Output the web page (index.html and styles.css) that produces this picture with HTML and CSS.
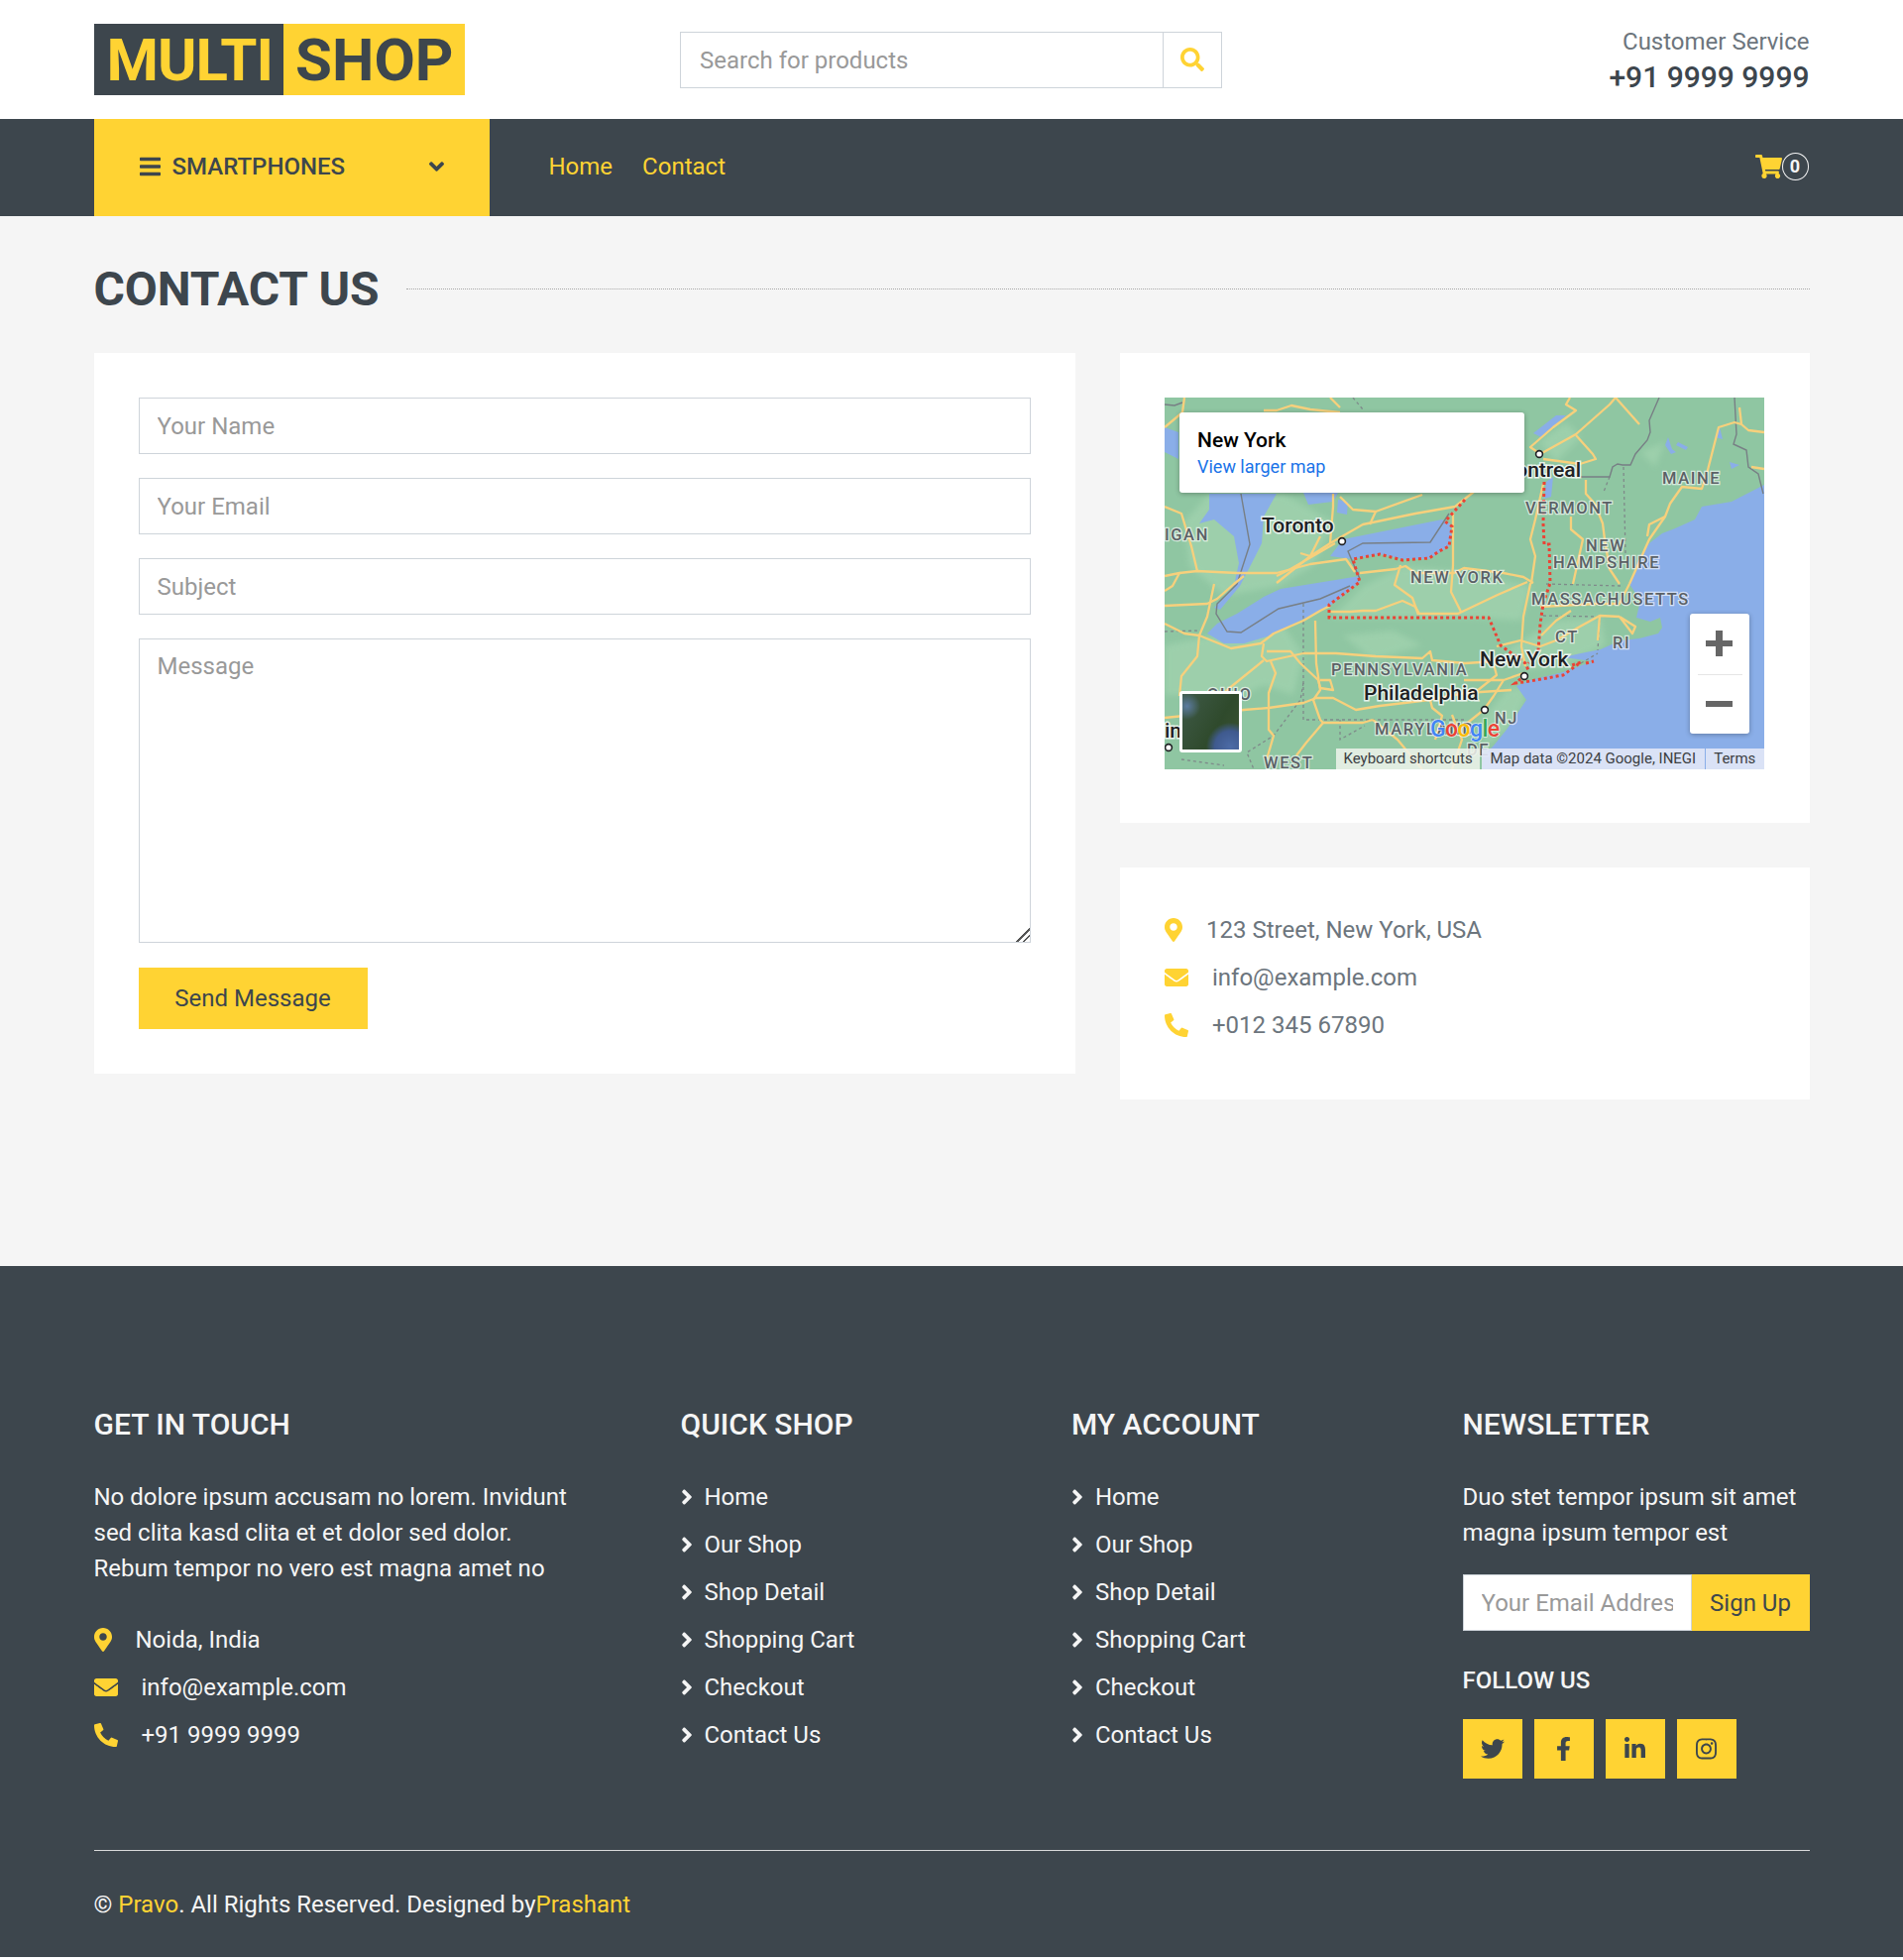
FILE: index.html
```html
<!DOCTYPE html>
<html lang="en">
<head>
<meta charset="utf-8">
<title>MultiShop - Contact</title>
<link rel="stylesheet" href="styles.css">
</head>
<body>
<svg class="sprite" aria-hidden="true">
  <symbol id="i-pin" viewBox="0 0 384 512"><path d="M172.268 501.67C26.97 291.031 0 269.413 0 192 0 85.961 85.961 0 192 0s192 85.961 192 192c0 77.413-26.97 99.031-172.268 309.67-9.535 13.774-29.93 13.773-39.464 0zM192 272c44.183 0 80-35.817 80-80s-35.817-80-80-80-80 35.817-80 80 35.817 80 80 80z"/></symbol>
  <symbol id="i-mail" viewBox="0 0 512 512"><path d="M502.3 190.8c3.9-3.1 9.7-.2 9.7 4.7V400c0 26.5-21.5 48-48 48H48c-26.5 0-48-21.5-48-48V195.6c0-5 5.7-7.8 9.7-4.7 22.4 17.4 52.1 39.5 154.1 113.6 21.1 15.4 56.7 47.8 92.2 47.6 35.7.3 72-32.8 92.3-47.6 102-74.1 131.6-96.3 154-113.7zM256 320c23.2.4 56.6-29.2 73.4-41.4 132.7-96.3 142.8-104.7 173.4-128.7 5.8-4.5 9.2-11.5 9.2-18.9v-19c0-26.5-21.5-48-48-48H48C21.5 64 0 85.5 0 112v19c0 7.4 3.4 14.3 9.2 18.9 30.6 23.9 40.7 32.4 173.4 128.7 16.8 12.2 50.2 41.8 73.4 41.4z"/></symbol>
  <symbol id="i-phone" viewBox="0 0 512 512"><path d="M497.39 361.8l-112-48a24 24 0 0 0-28 6.9l-49.6 60.6A370.66 370.66 0 0 1 130.6 204.11l60.6-49.6a23.94 23.94 0 0 0 6.9-28l-48-112A24.16 24.16 0 0 0 122.6.61l-104 24A24 24 0 0 0 0 48c0 256.5 207.9 464 464 464a24 24 0 0 0 23.4-18.6l24-104a24.29 24.29 0 0 0-14.01-27.6z"/></symbol>
  <symbol id="i-search" viewBox="0 0 512 512"><path d="M505 442.7L405.3 343c-4.5-4.5-10.6-7-17-7H372c27.6-35.3 44-79.7 44-128C416 93.1 322.9 0 208 0S0 93.1 0 208s93.1 208 208 208c48.3 0 92.7-16.4 128-44v16.3c0 6.4 2.5 12.5 7 17l99.7 99.7c9.4 9.4 24.6 9.4 33.9 0l28.3-28.3c9.4-9.4 9.4-24.6.1-34zM208 336c-70.7 0-128-57.2-128-128 0-70.7 57.2-128 128-128 70.7 0 128 57.2 128 128 0 70.7-57.2 128-128 128z"/></symbol>
  <symbol id="i-bars" viewBox="0 0 448 512"><path d="M16 132h416c8.837 0 16-7.163 16-16V76c0-8.837-7.163-16-16-16H16C7.163 60 0 67.163 0 76v40c0 8.837 7.163 16 16 16zm0 160h416c8.837 0 16-7.163 16-16v-40c0-8.837-7.163-16-16-16H16c-8.837 0-16 7.163-16 16v40c0 8.837 7.163 16 16 16zm0 160h416c8.837 0 16-7.163 16-16v-40c0-8.837-7.163-16-16-16H16c-8.837 0-16 7.163-16 16v40c0 8.837 7.163 16 16 16z"/></symbol>
  <symbol id="i-down" viewBox="0 0 320 512"><path d="M143 352.3L7 216.3c-9.4-9.4-9.4-24.6 0-33.9l22.6-22.6c9.4-9.4 24.6-9.4 33.9 0l96.4 96.4 96.4-96.4c9.4-9.4 24.6-9.4 33.9 0l22.6 22.6c9.4 9.4 9.4 24.6 0 33.9l-136 136c-9.2 9.4-24.4 9.4-33.8 0z"/></symbol>
  <symbol id="i-right" viewBox="0 0 256 512"><path d="M224.3 273l-136 136c-9.4 9.4-24.6 9.4-33.9 0l-22.6-22.6c-9.4-9.4-9.4-24.6 0-33.9l96.4-96.4-96.4-96.4c-9.4-9.4-9.4-24.6 0-33.9L54.3 103c9.4-9.4 24.6-9.4 33.9 0l136 136c9.5 9.4 9.5 24.6.1 34z"/></symbol>
  <symbol id="i-cart" viewBox="0 0 576 512"><path d="M528.12 301.319l47.273-208C578.806 78.301 567.391 64 551.99 64H159.208l-9.166-44.81C147.758 8.021 137.93 0 126.529 0H24C10.745 0 0 10.745 0 24v16c0 13.255 10.745 24 24 24h69.883l70.248 343.435C147.325 417.1 136 435.222 136 456c0 30.928 25.072 56 56 56s56-25.072 56-56c0-15.674-6.447-29.835-16.824-40h209.647C430.447 426.165 424 440.326 424 456c0 30.928 25.072 56 56 56s56-25.072 56-56c0-22.172-12.888-41.332-31.579-50.405l5.517-24.276c3.413-15.018-8.002-29.319-23.403-29.319H218.117l-6.545-32h293.145c11.206 0 20.92-7.754 23.403-18.681z"/></symbol>
  <symbol id="i-twitter" viewBox="0 0 512 512"><path d="M459.37 151.716c.325 4.548.325 9.097.325 13.645 0 138.72-105.583 298.558-298.558 298.558-59.452 0-114.68-17.219-161.137-47.106 8.447.974 16.568 1.299 25.34 1.299 49.055 0 94.213-16.568 130.274-44.832-46.132-.975-84.792-31.188-98.112-72.772 6.498.974 12.995 1.624 19.818 1.624 9.421 0 18.843-1.3 27.614-3.573-48.081-9.747-84.143-51.98-84.143-102.985v-1.299c13.969 7.797 30.214 12.67 47.431 13.319-28.264-18.843-46.781-51.005-46.781-87.391 0-19.492 5.197-37.36 14.294-52.954 51.655 63.675 129.3 105.258 216.365 109.807-1.624-7.797-2.599-15.918-2.599-24.04 0-57.828 46.782-104.934 104.934-104.934 30.213 0 57.502 12.67 76.67 33.137 23.715-4.548 46.456-13.32 66.599-25.34-7.798 24.366-24.366 44.833-46.132 57.827 21.117-2.273 41.584-8.122 60.426-16.243-14.292 20.791-32.161 39.308-52.628 54.253z"/></symbol>
  <symbol id="i-fb" viewBox="0 0 320 512"><path d="M279.14 288l14.22-92.66h-88.91v-60.13c0-25.35 12.42-50.06 52.24-50.06h40.42V6.26S260.43 0 225.36 0c-73.22 0-121.08 44.38-121.08 124.72v70.62H22.89V288h81.39v224h100.17V288z"/></symbol>
  <symbol id="i-in" viewBox="0 0 448 512"><path d="M100.28 448H7.4V148.9h92.88zM53.79 108.1C24.09 108.1 0 83.5 0 53.8a53.79 53.79 0 0 1 107.58 0c0 29.7-24.1 54.3-53.79 54.3zM447.9 448h-92.68V302.4c0-34.7-.7-79.2-48.29-79.2-48.29 0-55.69 37.7-55.69 76.7V448h-92.78V148.9h89.08v40.8h1.3c12.4-23.5 42.69-48.3 87.88-48.3 94 0 111.28 61.9 111.28 142.3V448z"/></symbol>
  <symbol id="i-ig" viewBox="0 0 448 512"><path d="M224.1 141c-63.6 0-114.9 51.3-114.9 114.9s51.3 114.9 114.9 114.9S339 319.5 339 255.9 287.7 141 224.1 141zm0 189.6c-41.1 0-74.7-33.5-74.7-74.7s33.5-74.7 74.7-74.7 74.7 33.5 74.7 74.7-33.6 74.7-74.7 74.7zm146.4-194.3c0 14.9-12 26.8-26.8 26.8-14.9 0-26.8-12-26.8-26.8s12-26.8 26.8-26.8 26.8 12 26.8 26.8zm76.1 27.2c-1.7-35.9-9.9-67.7-36.2-93.9-26.2-26.2-58-34.4-93.9-36.2-37-2.1-147.9-2.1-184.9 0-35.8 1.7-67.6 9.9-93.9 36.1s-34.4 58-36.2 93.9c-2.1 37-2.1 147.9 0 184.9 1.7 35.9 9.9 67.7 36.2 93.9s58 34.4 93.9 36.2c37 2.1 147.9 2.1 184.9 0 35.9-1.7 67.7-9.9 93.9-36.2 26.2-26.2 34.4-58 36.2-93.9 2.1-37 2.1-147.8 0-184.8zM398.8 388c-7.8 19.6-22.9 34.7-42.6 42.6-29.5 11.7-99.5 9-132.1 9s-102.7 2.6-132.1-9c-19.6-7.8-34.7-22.9-42.6-42.6-11.7-29.5-9-99.5-9-132.1s-2.6-102.7 9-132.1c7.8-19.6 22.9-34.7 42.6-42.6 29.5-11.7 99.5-9 132.1-9s102.7-2.6 132.1 9c19.6 7.8 34.7 22.9 42.6 42.6 11.7 29.5 9 99.5 9 132.1s2.7 102.7-9 132.1z"/></symbol>
</svg>

<header class="topbar">
  <a class="logo" href="#"><span class="logo-dark">MULTI</span><span class="logo-light">SHOP</span></a>
  <form class="search">
    <input class="search-input" type="text" placeholder="Search for products">
    <span class="search-btn"><svg class="ic-search"><use href="#i-search"/></svg></span>
  </form>
  <div class="service">
    <p class="service-label">Customer Service</p>
    <p class="service-phone">+91 9999 9999</p>
  </div>
</header>

<nav class="navbar">
  <a class="category" href="#">
    <span class="category-name"><svg class="ic-bars"><use href="#i-bars"/></svg>SMARTPHONES</span>
    <svg class="ic-down"><use href="#i-down"/></svg>
  </a>
  <div class="nav-links">
    <a href="#">Home</a>
    <a href="#">Contact</a>
  </div>
  <a class="cart" href="#"><svg class="ic-cart"><use href="#i-cart"/></svg><span class="cart-badge">0</span></a>
</nav>

<main class="main">
  <h2 class="section-title"><span>CONTACT US</span></h2>
  <div class="contact-grid">
    <form class="card form-card">
      <input class="field" type="text" placeholder="Your Name">
      <input class="field" type="email" placeholder="Your Email">
      <input class="field" type="text" placeholder="Subject">
      <textarea class="field field-area" placeholder="Message"></textarea>
      <button class="send-btn" type="button">Send Message</button>
    </form>
    <div class="side">
      <div class="card map-card">
        <div class="map">
          <svg class="map-svg" viewBox="0 0 605 375" role="img" aria-label="Map of New York">
            <rect width="605" height="375" fill="#8fc6a2"/>
            <g class="map-light">
              <path d="M45 97 120 97 170 125 150 170 115 190 60 200 25 170 20 125Z"/>
              <path d="M170 220 200 190 240 170 290 175 370 190 360 225 310 222 166 222Z"/>
              <path d="M0 250 50 240 120 230 140 260 130 300 100 290 60 310 20 300 0 300Z"/>
              <path d="M345 255 395 225 440 222 445 250 400 270 360 275Z"/>
              <path d="M378 45 405 25 420 40 395 65Z"/>
              <path d="M345 295 365 290 362 310 345 335 325 350 315 330Z"/>
              <path d="M180 240 230 235 260 250 210 265Z"/>
              <path d="M480 55 505 45 495 70Z"/>
            </g>
            <g fill="#8aaee8">
              <path d="M605 88 572 105 542 110 535 123 515 132 502 137 489 147 479 160 472 180 469 188 480 205 476 222 490 226 500 222 502 232 498 238 479 243 460 245 440 254 420 258 402 262 432 266 402 277 369 285 355 291 365 305 345 335 332 351 322 361 320 375 605 375Z"/>
              <path d="M167 160 180 143 280 123 288 127 290 140 287 150 267 163 240 163 217 158 190 163 197 186 163 213 137 225 107 240 80 248 60 248 43 238 53 228 73 218 100 201 117 193 197 180 190 163Z"/>
              <path d="M45 97 45 113 35 127 50 123 70 140 75 167 72 180 70 192 50 212 56 214 76 190 90 163 98 147 100 120 113 97Z"/>
              <path d="M0 30 14 35 14 62 0 55Z"/>
              <path d="M140 96 175 96 170 105 145 108Z"/>
              <path d="M175 103 185 105 184 118 174 116Z"/>
              <path d="M395 18 405 18 380 40 372 36Z"/>
              <path d="M385 85 392 80 390 100 383 102Z"/>
              <path d="M508 40 512 52 516 55 511 57 505 48Z"/>
              <path d="M518 45 528 50 526 53 516 48Z"/>
              <path d="M570 65 580 68 572 72Z"/>
              <path d="M555 40 560 30 563 42Z"/>
            </g>
            <g class="map-dash">
              <path d="M463 70 465 157"/>
              <path d="M449 80 443 95"/>
              <path d="M385 188 460 190"/>
              <path d="M382 220 439 221 437 255"/>
              <path d="M140 208 140 325 213 325 302 325"/>
              <path d="M140 288 137 305 110 341 83 358 90 375"/>
              <path d="M177 325 177 345 202 331"/>
              <path d="M0 236 37 235"/>
              <path d="M17 365 60 371"/>
              <path d="M420 268 437 258"/>
              <path d="M190 0 200 12"/>
            </g>
            <g class="map-border">
              <path d="M77 97 86 148 73 188 53 208 52 218 63 236 77 237 115 213 157 203 187 190"/>
              <path d="M197 183 185 155 200 147 268 146 287 117"/>
              <path d="M420 80 449 80 452 70 457 67 462 68 470 68 475 57 487 43 490 35 489 23 499 0"/>
              <path d="M575 0 577 37 574 47 587 53 589 70 599 77 604 97"/>
              <path d="M0 7 10 8 18 5"/>
            </g>
            <g class="map-road">
              <path d="M100 13 113 13 128 8 147 12 177 15"/>
              <path d="M167 0 177 10"/>
              <path d="M0 30 18 15 20 0"/>
              <path d="M170 97 170 110 167 147"/>
              <path d="M177 100 190 113 213 115 207 128"/>
              <path d="M167 147 200 128 253 117 293 110 312 95"/>
              <path d="M213 115 260 98"/>
              <path d="M167 147 147 160 137 157"/>
              <path d="M172 147 127 173 113 180"/>
              <path d="M15 177 33 175 73 177 113 177 147 168 183 163 192 176"/>
              <path d="M157 140 147 160 113 187"/>
              <path d="M0 110 17 117 27 150 33 175"/>
              <path d="M0 210 43 208 53 203 70 188 80 180"/>
              <path d="M0 180 15 177 8 190 0 195"/>
              <path d="M50 188 43 221 35 240"/>
              <path d="M35 240 33 261 17 281 15 301"/>
              <path d="M0 228 20 238 35 240 67 253 97 248 110 238 140 225 157 215 167 210"/>
              <path d="M100 248 98 261 103 266 140 258"/>
              <path d="M103 256 127 256 137 268 155 285 157 293"/>
              <path d="M100 265 63 295 55 305"/>
              <path d="M107 266 112 278 105 298 105 335 110 341 103 365"/>
              <path d="M0 323 80 315 105 313 140 308 153 303 170 303 193 315 217 311 267 305 303 298 350 295"/>
              <path d="M152 225 153 268 157 295 150 305 157 325 160 328"/>
              <path d="M160 328 200 328 210 325"/>
              <path d="M160 328 143 348 133 361"/>
              <path d="M140 258 173 258 213 261 260 263 268 256 270 265 303 268 335 266"/>
              <path d="M267 301 270 313 280 321 273 345"/>
              <path d="M157 293 170 295 167 285 157 285"/>
              <path d="M197 177 233 173 243 170 253 177 292 177 302 172 342 177 362 181 372 187"/>
              <path d="M291 116 291 169 289 196 299 216"/>
              <path d="M238 169 232 189 250 202 256 219"/>
              <path d="M167 216 187 216 200 215 213 215 240 205 253 211 257 218 296 218 336 199 366 186"/>
              <path d="M382 87 374 123 369 143 374 160 370 187 369 188 362 221 360 251 364 271"/>
              <path d="M335 251 359 245 379 251 395 245 419 231 439 220 459 221"/>
              <path d="M362 278 342 285 332 301 322 315 302 331"/>
              <path d="M342 285 302 285"/>
              <path d="M439 220 437 245"/>
              <path d="M459 221 472 238 475 231 459 221"/>
              <path d="M379 211 435 208 459 208 469 188"/>
              <path d="M379 57 415 37 449 7 455 0"/>
              <path d="M455 0 479 27"/>
              <path d="M379 57 369 50 392 30 415 13 405 7 409 0"/>
              <path d="M415 38 432 57 435 62 419 67 382 62"/>
              <path d="M425 83 425 97 434 107 442 127 444 143 449 173 459 188"/>
              <path d="M410 120 410 133 422 143 412 188"/>
              <path d="M469 188 489 143 505 120 510 107 522 90 542 92 547 77 559 30 575 25 582 27 589 33 605 35"/>
              <path d="M505 120 489 128 487 140"/>
              <path d="M582 27 580 10"/>
              <path d="M592 70 605 72"/>
              <path d="M380 240 395 225 410 215"/>
              <path d="M330 262 335 280 310 300"/>
              <path d="M210 325 235 345 260 375"/>
              <path d="M290 320 300 345 290 375"/>
            </g>
            <g class="map-red">
              <path d="M303 103 283 125 290 130 287 150 277 155 267 162 240 164 217 158 190 163 197 186 166 209 166 222 327 222 339 250 364 268 367 275"/>
              <path d="M383 85 382 127 383 148 388 148 389 187 382 208 379 228 377 255 367 268"/>
              <path d="M364 280 354 288 369 286 402 280 420 267 411 270"/>
              <path d="M425 268 433 266"/>
            </g>
            <g class="map-city">
              <circle cx="179" cy="145" r="3.4"/>
              <circle cx="378" cy="57" r="3.4"/>
              <circle cx="363" cy="281" r="3.4"/>
              <circle cx="323" cy="315" r="3.4"/>
              <circle cx="4" cy="353" r="3.4"/>
            </g>
            <g class="map-state">
              <text x="0" y="144">IGAN</text>
              <text x="364" y="117">VERMONT</text>
              <text x="502" y="87">MAINE</text>
              <text x="425" y="155">NEW</text>
              <text x="392" y="172">HAMPSHIRE</text>
              <text x="248" y="187">NEW YORK</text>
              <text x="370" y="209">MASSACHUSETTS</text>
              <text x="394" y="247">CT</text>
              <text x="452" y="253">RI</text>
              <text x="168" y="280">PENNSYLVANIA</text>
              <text x="333" y="329">NJ</text>
              <text x="305" y="361">DE</text>
              <text x="212" y="340">MARYLAND</text>
              <text x="43" y="305">OHIO</text>
              <text x="100" y="374">WEST</text>
            </g>
            <g class="map-label">
              <text x="98" y="136">Toronto</text>
              <text x="420" y="80" text-anchor="end">Montreal</text>
              <text x="318" y="271">New York</text>
              <text x="201" y="305">Philadelphia</text>
              <text x="0" y="343">in</text>
            </g>
            <text class="map-google" x="268" y="342"><tspan fill="#4285f4">G</tspan><tspan fill="#ea4335">o</tspan><tspan fill="#fbbc04">o</tspan><tspan fill="#4285f4">g</tspan><tspan fill="#34a853">l</tspan><tspan fill="#ea4335">e</tspan></text>
          </svg>
          <div class="map-info">
            <div class="map-place">New York</div>
            <a class="map-link" href="#">View larger map</a>
          </div>
          <div class="map-thumb"></div>
          <div class="map-zoom">
            <span class="zoom-btn"><i class="plus"></i></span>
            <span class="zoom-btn zoom-minus"><i class="minus"></i></span>
          </div>
          <div class="map-attr">
            <span class="attr-item attr-keys">Keyboard shortcuts</span>
            <span class="attr-item attr-data">Map data ©2024 Google, INEGI</span>
            <span class="attr-item attr-terms">Terms</span>
          </div>
        </div>
      </div>
      <div class="card info-card">
        <p class="info-row"><svg class="ic-pin"><use href="#i-pin"/></svg>123 Street, New York, USA</p>
        <p class="info-row"><svg class="ic-wide"><use href="#i-mail"/></svg>info@example.com</p>
        <p class="info-row"><svg class="ic-wide"><use href="#i-phone"/></svg>+012 345 67890</p>
      </div>
    </div>
  </div>
</main>

<footer class="footer">
  <div class="footer-grid">
    <div class="footer-about">
      <h5 class="footer-title">GET IN TOUCH</h5>
      <p class="footer-text">No dolore ipsum accusam no lorem. Invidunt sed clita kasd clita et et dolor sed dolor. Rebum tempor no vero est magna amet no</p>
      <p class="info-row"><svg class="ic-pin"><use href="#i-pin"/></svg>Noida, India</p>
      <p class="info-row"><svg class="ic-wide"><use href="#i-mail"/></svg>info@example.com</p>
      <p class="info-row"><svg class="ic-wide"><use href="#i-phone"/></svg>+91 9999 9999</p>
    </div>
    <div>
      <h5 class="footer-title">QUICK SHOP</h5>
      <ul class="footer-links">
        <li><svg class="ic-right"><use href="#i-right"/></svg>Home</li>
        <li><svg class="ic-right"><use href="#i-right"/></svg>Our Shop</li>
        <li><svg class="ic-right"><use href="#i-right"/></svg>Shop Detail</li>
        <li><svg class="ic-right"><use href="#i-right"/></svg>Shopping Cart</li>
        <li><svg class="ic-right"><use href="#i-right"/></svg>Checkout</li>
        <li><svg class="ic-right"><use href="#i-right"/></svg>Contact Us</li>
      </ul>
    </div>
    <div>
      <h5 class="footer-title">MY ACCOUNT</h5>
      <ul class="footer-links">
        <li><svg class="ic-right"><use href="#i-right"/></svg>Home</li>
        <li><svg class="ic-right"><use href="#i-right"/></svg>Our Shop</li>
        <li><svg class="ic-right"><use href="#i-right"/></svg>Shop Detail</li>
        <li><svg class="ic-right"><use href="#i-right"/></svg>Shopping Cart</li>
        <li><svg class="ic-right"><use href="#i-right"/></svg>Checkout</li>
        <li><svg class="ic-right"><use href="#i-right"/></svg>Contact Us</li>
      </ul>
    </div>
    <div>
      <h5 class="footer-title">NEWSLETTER</h5>
      <p class="news-text">Duo stet tempor ipsum sit amet magna ipsum tempor est</p>
      <form class="news-form">
        <input class="news-input" type="text" placeholder="Your Email Address">
        <button class="news-btn" type="button">Sign Up</button>
      </form>
      <h6 class="follow-title">FOLLOW US</h6>
      <div class="social">
        <a href="#"><svg class="soc-tw"><use href="#i-twitter"/></svg></a>
        <a href="#"><svg class="soc-fb"><use href="#i-fb"/></svg></a>
        <a href="#"><svg class="soc-in"><use href="#i-in"/></svg></a>
        <a href="#"><svg class="soc-ig"><use href="#i-ig"/></svg></a>
      </div>
    </div>
  </div>
  <p class="copyright">© <a href="#">Pravo</a>. All Rights Reserved. Designed by<a href="#">Prashant</a></p>
</footer>
</body>
</html>
```

FILE: styles.css
```css
* { box-sizing: border-box; }
html, body { margin: 0; padding: 0; }
body {
  font-family: Roboto, "Liberation Sans", sans-serif;
  font-size: 24px;
  line-height: 36px;
  color: #6c757d;
  background: #fff;
}
a { color: inherit; text-decoration: none; }
p, h2, h5, h6, ul { margin: 0; padding: 0; }
svg { fill: currentColor; flex: none; }
.sprite { display: none; }
input, textarea, button { font: inherit; outline: none; }
::placeholder { color: #999; opacity: 1; }

/* header */
.topbar {
  display: flex;
  align-items: center;
  height: 120px;
  padding: 0 94.5px;
}
.logo {
  display: flex;
  width: 591.5px;
  height: 72px;
  font-size: 60px;
  line-height: 74px;
  font-weight: 700;
}
.logo-dark { background: #3d464d; color: #ffd333; padding: 0 11px 0 13px; letter-spacing: -1px; }
.logo-light { background: #ffd333; color: #3d464d; padding: 0 12px; }
.search { display: flex; width: 547px; height: 57px; }
.search-input {
  flex: 1;
  min-width: 0;
  border: 1px solid #ced4da;
  padding: 2px 18px 0 19px;
  color: #495057;
}
.search-btn {
  width: 60px;
  border: 1px solid #ced4da;
  border-left: 1px solid #ced4da;
  margin-left: -1px;
  display: flex;
  align-items: center;
  justify-content: center;
  color: #ffd333;
}
.ic-search { width: 24px; height: 24px; }
.service { margin-left: auto; text-align: right; }
.service-phone { font-size: 30px; font-weight: 500; color: #3d464d; }

/* nav */
.navbar {
  display: flex;
  align-items: center;
  height: 98px;
  padding: 0 94.5px;
  background: #3d464d;
}
.category {
  width: 399.5px;
  height: 98px;
  background: #ffd333;
  color: #3d464d;
  font-weight: 500;
  display: flex;
  align-items: center;
  justify-content: space-between;
  padding: 0 46px 2px;
}
.category-name { display: flex; align-items: center; }
.ic-bars { width: 21px; height: 24px; margin-right: 12px; }
.ic-down { width: 15px; height: 24px; }
.nav-links { display: flex; gap: 30px; margin-left: 59.5px; padding-bottom: 2px; color: #ffd333; }
.cart { margin-left: auto; margin-right: 1px; display: flex; align-items: center; padding-bottom: 2px; color: #ffd333; }
.ic-cart { width: 27px; height: 24px; }
.cart-badge {
  width: 27px;
  height: 28px;
  border: 1px solid #f5f5f5;
  border-radius: 50%;
  color: #f5f5f5;
  font-size: 18px;
  font-weight: 700;
  line-height: 26px;
  text-align: center;
}

/* main */
.main { background: #f5f5f5; padding: 45px 94.5px 168px; }
.section-title {
  display: flex;
  align-items: center;
  gap: 28px;
  margin-bottom: 35px;
  font-size: 48px;
  line-height: 58px;
  font-weight: 700;
  letter-spacing: -.12px;
  color: #3d464d;
}
.section-title::after {
  content: "";
  flex: 1;
  margin-top: -2px;
  border-top: 1px dotted #a8a8a8;
}
.contact-grid { display: flex; gap: 45px; align-items: flex-start; }
.card { background: #fff; padding: 45px; }
.form-card { width: 990px; display: flex; flex-direction: column; align-items: flex-start; }
.field {
  display: block;
  width: 100%;
  height: 57px;
  margin-bottom: 24px;
  padding: 0 18px;
  border: 1px solid #ced4da;
  color: #495057;
  background: #fff;
  border-radius: 0;
}
.field-area { height: 307px; margin-bottom: 25px; padding-top: 9px; padding-bottom: 9px; line-height: 36px; }
.field-area::-webkit-resizer {
  background: linear-gradient(135deg, transparent 52%, #555 52%, #555 60%, transparent 60%, transparent 74%, #555 74%, #555 82%, transparent 82%);
}
.send-btn {
  height: 62px;
  width: 231px;
  border: 0;
  background: #ffd333;
  color: #3d464d;
  padding: 0;
}
.side { flex: 1; display: flex; flex-direction: column; gap: 45px; }
.map-card { padding-bottom: 54px; }
.info-card { padding-left: 45.5px; }

/* map */
.map { position: relative; width: 605px; height: 375px; overflow: hidden; background: #8fc6a2; }
.map-svg { display: block; width: 605px; height: 375px; font-family: Roboto, sans-serif; }
.map-light path { fill: #a3d4b0; opacity: .7; filter: blur(3px); }
.map-dash path { fill: none; stroke: #7f8a8a; stroke-width: 1.3; stroke-dasharray: 3 3; }
.map-border path { fill: none; stroke: #787f85; stroke-width: 1.4; }
.map-road path { fill: none; stroke: #f7d07c; stroke-width: 2.3; stroke-linejoin: round; }
.map-red path { fill: none; stroke: #ea4335; stroke-width: 3; stroke-dasharray: 3 3; }
.map-city circle { fill: #fff; stroke: #202124; stroke-width: 1.6; }
.map-state text {
  font-size: 16.5px;
  font-weight: 500;
  letter-spacing: 1.6px;
  fill: #5b6166;
  stroke: rgba(255,255,255,.65);
  stroke-width: 2.5px;
  paint-order: stroke;
}
.map-label text {
  font-size: 21px;
  font-weight: 500;
  fill: #202124;
  stroke: rgba(255,255,255,.8);
  stroke-width: 3px;
  paint-order: stroke;
}
.map-google {
  font-size: 23px;
  font-weight: 500;
  letter-spacing: -.6px;
  stroke: rgba(255,255,255,.7);
  stroke-width: 1.5px;
  paint-order: stroke;
}
.map-info {
  position: absolute;
  left: 15px;
  top: 15px;
  width: 348px;
  height: 81px;
  padding: 15px 18.5px;
  background: #fff;
  border-radius: 3px;
  box-shadow: 0 1px 5px rgba(0,0,0,.3);
}
.map-place { font-size: 21px; font-weight: 500; line-height: 26px; color: #000; }
.map-link { display: block; font-size: 18px; line-height: 27px; color: #1a73e8; }
.map-thumb {
  position: absolute;
  left: 15px;
  top: 296px;
  width: 63px;
  height: 62px;
  border: 3px solid #fff;
  border-radius: 3px;
  background:
    radial-gradient(circle at 85% 95%, #4c6ba6 0, #3f5a8e 22%, transparent 34%),
    radial-gradient(circle at 8% 22%, #5c7ba0 0, transparent 20%),
    linear-gradient(120deg, #3f5a48, #2f4a2c 60%, #3a5232);
}
.map-zoom {
  position: absolute;
  left: 530px;
  top: 218px;
  width: 60px;
  height: 121px;
  background: #fff;
  border-radius: 3px;
  box-shadow: 0 1px 5px rgba(0,0,0,.3);
  display: flex;
  flex-direction: column;
}
.zoom-btn { flex: 1; display: flex; align-items: center; justify-content: center; }
.zoom-minus { position: relative; }
.zoom-minus::before {
  content: "";
  position: absolute;
  left: 8px;
  right: 7px;
  top: 0;
  border-top: 1px solid #e6e6e6;
}
.plus, .minus { display: block; width: 27px; height: 6px; background: #666; position: relative; }
.plus::after {
  content: "";
  position: absolute;
  left: 10px;
  top: -10px;
  width: 7px;
  height: 26px;
  background: #666;
}
.map-attr {
  position: absolute;
  left: 173px;
  right: 0;
  bottom: 0;
  height: 21px;
  display: flex;
  font-size: 15px;
  line-height: 21px;
  color: #3c4043;
}
.attr-item { padding: 0 9px; background: rgba(245,245,245,.7); white-space: nowrap; }
.attr-keys { width: 145px; padding-left: 8px; background: rgba(240,243,236,.85); }
.attr-data { flex: 1; margin-left: 2px; background: rgba(226,232,247,.9); }
.attr-terms { margin-left: 1px; padding: 0 10px 0 8px; background: rgba(226,232,247,.9); }

/* contact rows */
.info-row { display: flex; align-items: center; margin-bottom: 12px; }
.info-row svg { color: #ffd333; margin-right: 24px; }
.ic-pin { width: 18px; height: 24px; }
.ic-wide { width: 24px; height: 24px; }

/* footer */
.footer {
  background: #3d464d;
  color: #f5f5f5;
  padding: 142px 94.5px 35px;
}
.footer-grid { display: grid; grid-template-columns: 592px 394.5px 394.5px 350px; }
.footer-title {
  font-size: 30px;
  line-height: 36px;
  font-weight: 500;
  color: #f5f5f5;
  margin-bottom: 37px;
}
.footer-text { max-width: 480px; margin-bottom: 36px; }
.footer-links { list-style: none; }
.footer-links li { display: flex; align-items: center; margin-bottom: 12px; }
.ic-right { width: 12px; height: 24px; margin-right: 12px; }
.news-text { margin-bottom: 24px; }
.news-form { display: flex; height: 57px; }
.news-input {
  width: 231px;
  border: 1px solid #ced4da;
  padding: 0 18px;
  background: #fff;
  color: #495057;
}
.news-btn { flex: 1; border: 0; padding: 0; background: #ffd333; color: #3d464d; }
.follow-title {
  margin-top: 36px;
  margin-bottom: 24px;
  font-size: 24px;
  line-height: 29px;
  font-weight: 500;
  color: #f5f5f5;
}
.social { display: flex; gap: 12px; margin-bottom: 72px; }
.social a {
  width: 60px;
  height: 60px;
  background: #ffd333;
  color: #3d464d;
  display: flex;
  align-items: center;
  justify-content: center;
}
.soc-tw { width: 24px; height: 24px; }
.soc-fb { width: 15px; height: 24px; }
.soc-in { width: 21px; height: 24px; }
.soc-ig { width: 21px; height: 24px; }
.copyright {
  border-top: 1px solid rgba(245,245,245,.85);
  padding-top: 36px;
}
.copyright a { color: #ffd333; }
```
